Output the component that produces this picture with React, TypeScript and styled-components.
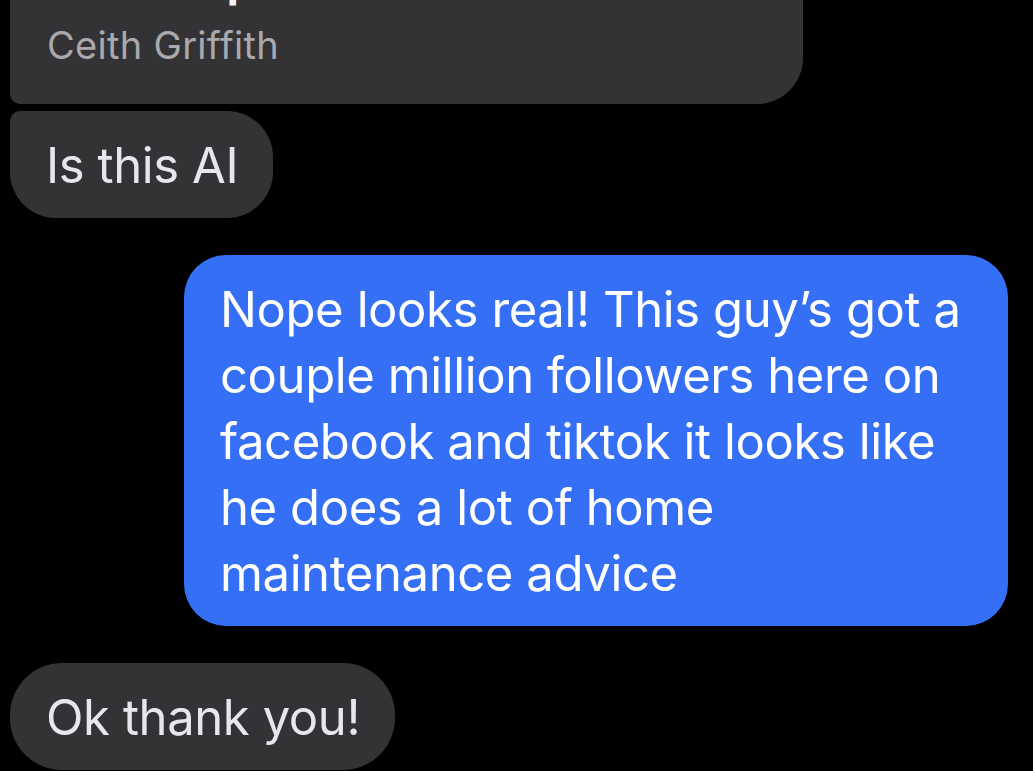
import * as React from "react";
import styled, { createGlobalStyle, css } from "styled-components";

const GlobalStyle = createGlobalStyle`
  html, body {
    margin: 0;
    padding: 0;
    background: #000;
  }
  body {
    font-family: Inter, "Noto Sans", "Liberation Sans", sans-serif;
    overflow: hidden;
    -webkit-font-smoothing: antialiased;
  }
`;

const Thread = styled.div`
  display: flex;
  flex-direction: column;
  align-items: flex-start;
  height: 771px;
  padding: 0 25px 0 10px;
  overflow: hidden;
`;

// shared post preview, scrolled partly out of view
const SharedCard = styled.div`
  margin-top: -67px;
  width: 793px;
  box-sizing: border-box;
  padding: 20px 36px 35px 37px;
  background: #333335;
  border-radius: 0 0 46px 10px;
  display: flex;
  flex-direction: column;
  gap: 12px;
`;

const CardTitle = styled.div`
  font-size: 44px;
  line-height: 56px;
  font-weight: 700;
  color: #f2f2f5;
  white-space: nowrap;
`;

const CardSource = styled.div`
  font-size: 38px;
  line-height: 48px;
  color: #a9a9ae;
  letter-spacing: 0.3px;
`;

interface BubbleProps {
  $outgoing?: boolean;
  $gap: number;
  $radius: string;
}

const Bubble = styled.div<BubbleProps>`
  margin-top: ${p => p.$gap}px;
  box-sizing: border-box;
  padding: 22px 35px 19px 36px;
  font-size: 49px;
  line-height: 66px;
  letter-spacing: -0.4px;
  border-radius: ${p => p.$radius};
  background: #333335;
  color: #e7e7eb;
  white-space: nowrap;

  ${p =>
    p.$outgoing &&
    css`
      align-self: flex-end;
      width: 824px;
      background: #346ff5;
      color: #ffffff;
    `}
`;

const Line = styled.span`
  display: block;
`;

const reply = [
  "Nope looks real! This guy\u2019s got a",
  "couple million followers here on",
  "facebook and tiktok it looks like",
  "he does a lot of home",
  "maintenance advice",
];

export default function App() {
  return (
    <>
      <GlobalStyle />
      <Thread>
        <SharedCard>
          <CardTitle>Home repair</CardTitle>
          <CardSource>Ceith Griffith</CardSource>
        </SharedCard>
        <Bubble $gap={7} $radius="10px 46px 46px 46px">
          Is this AI
        </Bubble>
        <Bubble $outgoing $gap={37} $radius="42px">
          {reply.map(line => (
            <Line key={line}>{line}</Line>
          ))}
        </Bubble>
        <Bubble $gap={37} $radius="52px">
          Ok thank you!
        </Bubble>
      </Thread>
    </>
  );
}
